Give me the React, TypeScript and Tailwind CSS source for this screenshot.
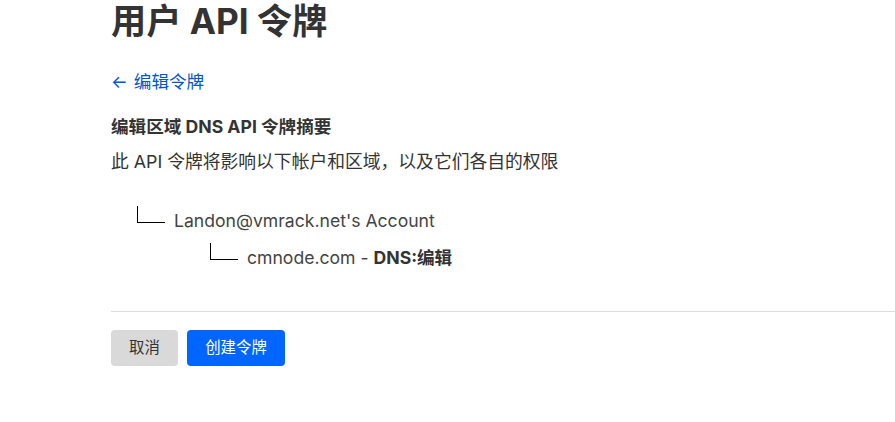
const font = "font-['Inter','Noto_Sans_CJK_SC',sans-serif]";

export default function App() {
  return (
    <div className={`${font} min-h-screen bg-white text-[#333]`}>
      <div className="pl-[111px]">
        <h1 className="-mt-[3px] text-[35.2px] font-bold leading-[48px] text-[#333]">用户 API 令牌</h1>

        <a href="#" className="mt-[24px] flex items-center gap-[6px] text-[17.6px] leading-[26px] text-[#0055cc]">
          <span>←</span>
          <span>编辑令牌</span>
        </a>

        <h2 className="mt-[19px] text-[17.6px] font-bold leading-[26px] text-[#333]">编辑区域 DNS API 令牌摘要</h2>
        <p className="mt-[9px] text-[17.8px] leading-[26px] text-[#333]">此 API 令牌将影响以下帐户和区域，以及它们各自的权限</p>

        <div className="mt-[31px] flex flex-col">
          <div className="flex items-center pl-[26px]">
            <span className="mb-[12px] h-[17px] w-[28px] border-b border-l border-black" />
            <span className="ml-[9px] text-[17.6px] leading-[22px] text-[#444]">Landon@vmrack.net's Account</span>
          </div>
          <div className="mt-[8px] flex items-center pl-[99px]">
            <span className="mb-[12px] h-[17px] w-[28px] border-b border-l border-black" />
            <span className="ml-[9px] text-[17.6px] leading-[22px] text-[#444]">
              cmnode.com - <b className="font-bold text-[#333]">DNS:编辑</b>
            </span>
          </div>
        </div>

        <div className="mt-[39px] border-t border-[#dddddd]" />

        <div className="mt-[18px] flex gap-[9px]">
          <button className="h-[36px] w-[67px] rounded-[4px] bg-[#d9d9d9] text-[15.4px] text-[#333]">取消</button>
          <button className="h-[36px] w-[98px] rounded-[4px] bg-[#0066ff] text-[15.4px] text-white">创建令牌</button>
        </div>
      </div>
    </div>
  );
}
